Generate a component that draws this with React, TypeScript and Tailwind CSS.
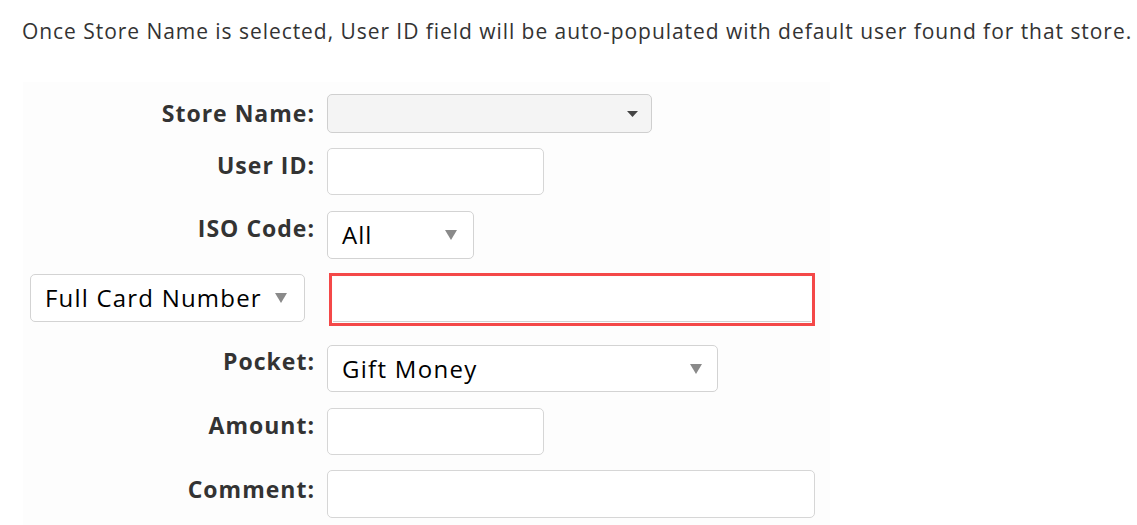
function Caret({ className = "" }: { className?: string }) {
  return (
    <svg width="12" height="10" viewBox="0 0 12 10" className={className}>
      <path d="M0 0 L12 0 L6 10 Z" fill="currentColor" />
    </svg>
  );
}

function Label({ children, top = "pt-[5px]" }: { children: string; top?: string }) {
  return (
    <div className={`w-[292px] shrink-0 text-right font-bold text-[23px] tracking-[1px] leading-[24px] text-[#333] ${top}`}>
      {children}
    </div>
  );
}

export default function App() {
  return (
    <div className="w-[1137px] h-[525px] bg-white font-['Open_Sans',sans-serif] overflow-hidden">
      <p className="pt-[19px] pl-[22px] text-[21px] tracking-[0.95px] leading-[24px] text-[#333] whitespace-nowrap">
        Once Store Name is selected, User ID field will be auto-populated with default user found for that store.
      </p>

      <div className="mt-[39px] ml-[23px] w-[807px] h-[443px] bg-[#fdfdfd] pt-[12px]">
        {/* Store Name */}
        <div className="flex items-start mb-[15px]">
          <Label top="pt-[7px]">Store Name:</Label>
          <div className="ml-3 w-[325px] h-[39px] rounded-[5px] border border-[#cfcfcf] bg-[#f4f4f4] flex items-center justify-end pr-[13px]">
            <svg width="11" height="6" viewBox="0 0 11 6" className="text-[#444]">
              <path d="M0 0 L11 0 L5.5 6 Z" fill="currentColor" />
            </svg>
          </div>
        </div>

        {/* User ID */}
        <div className="flex items-start mb-[16px]">
          <Label>User ID:</Label>
          <input className="ml-3 w-[217px] h-[47px] rounded-[5px] border border-[#d6d6d6] bg-white outline-none" />
        </div>

        {/* ISO Code */}
        <div className="flex items-start mb-[14px]">
          <Label>ISO Code:</Label>
          <div className="ml-3 w-[147px] h-[48px] rounded-[5px] border border-[#d3d3d3] bg-white flex items-center justify-between pl-[14px] pr-[16px]">
            <span className="text-[24px] tracking-[1px] text-black">All</span>
            <Caret className="text-[#8a8a8a]" />
          </div>
        </div>

        {/* Full Card Number */}
        <div className="flex items-start mb-[19px]">
          <div className="w-[292px] shrink-0 flex justify-end pr-[10px] pt-[1px]">
            <div className="w-[275px] h-[48px] rounded-[5px] border border-[#d3d3d3] bg-white flex items-center pl-[14px] gap-[13px]">
              <span className="text-[24px] tracking-[1.2px] text-black whitespace-nowrap">Full Card Number</span>
              <Caret className="text-[#8a8a8a]" />
            </div>
          </div>
          <div className="ml-[14px] w-[486px] h-[53px] border-[3px] border-[#f44848] p-px">
            <input className="w-full h-full bg-white border-b border-[#d0d0d0] outline-none" />
          </div>
        </div>

        {/* Pocket */}
        <div className="flex items-start mb-[16px]">
          <Label top="pt-[4px]">Pocket:</Label>
          <div className="ml-3 w-[391px] h-[47px] rounded-[5px] border border-[#d3d3d3] bg-white flex items-center justify-between pl-[14px] pr-[15px]">
            <span className="text-[24px] tracking-[1.3px] text-black">Gift Money</span>
            <Caret className="text-[#8a8a8a]" />
          </div>
        </div>

        {/* Amount */}
        <div className="flex items-start mb-[15px]">
          <Label>Amount:</Label>
          <input className="ml-3 w-[217px] h-[47px] rounded-[5px] border border-[#d6d6d6] bg-white outline-none" />
        </div>

        {/* Comment */}
        <div className="flex items-start">
          <Label top="pt-[7px]">Comment:</Label>
          <input className="ml-3 w-[488px] h-[48px] rounded-[5px] border border-[#d6d6d6] bg-white outline-none" />
        </div>
      </div>
    </div>
  );
}
